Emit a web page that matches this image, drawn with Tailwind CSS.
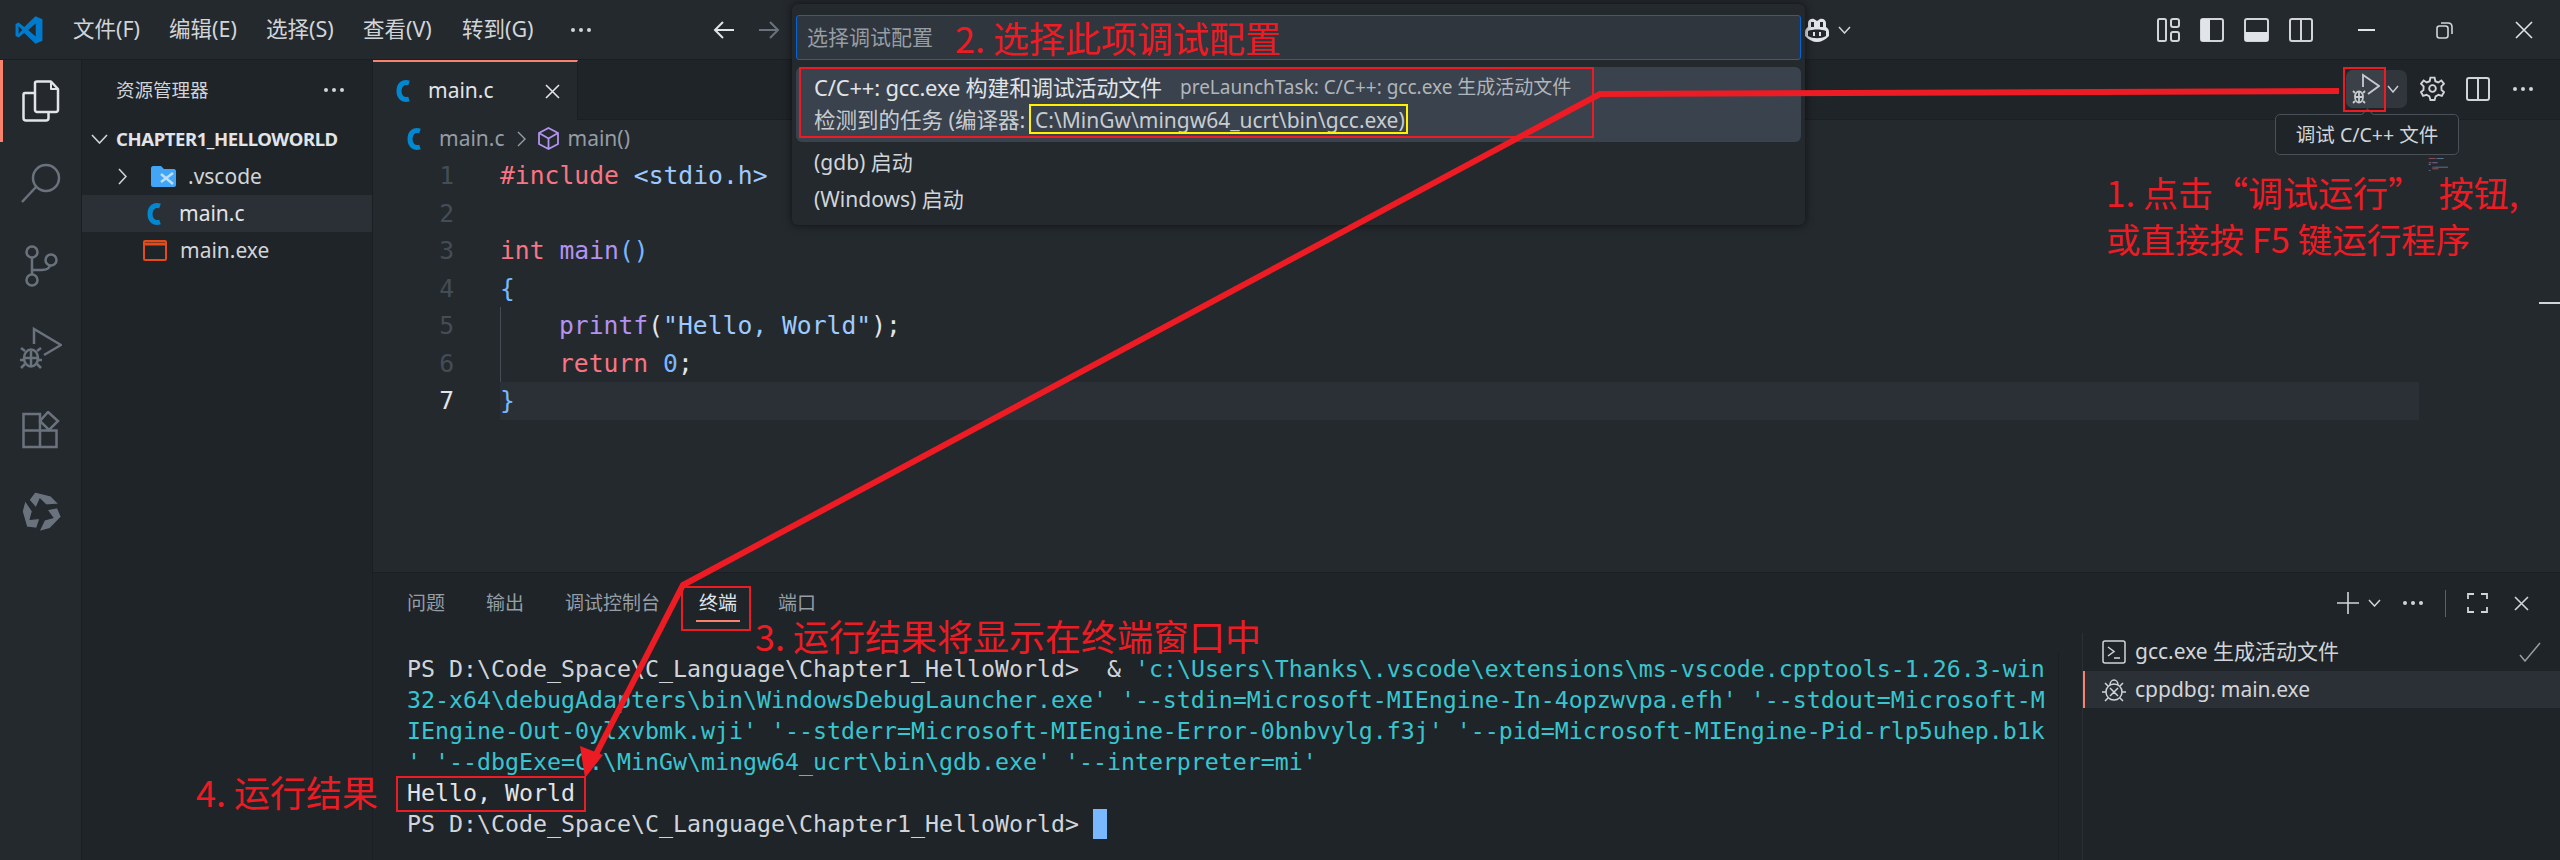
<!DOCTYPE html>
<html lang="zh-CN">
<head>
  <meta charset="UTF-8" />
  <title>main.c - Visual Studio Code</title>
  <script src="https://cdn.jsdelivr.net/npm/@tailwindcss/browser@4"></script>
</head>
<body class="bg-[#24292e]">
<div class="relative w-[2560px] h-[860px] overflow-hidden bg-[#24292e] text-[#e1e4e8] font-['Noto_Sans','Noto_Sans_CJK_SC',sans-serif]">

  <!-- title bar -->
  <header class="h-[60px] flex items-center border-b border-[#1b1f23] text-[21.500px] text-[#d1d5da]">
    <div class="w-[73px] pl-[15px] shrink-0">
      <svg width="28" height="28" viewBox="0 0 100 100"><path fill="#007acc" fill-rule="evenodd" d="M73 1L98 12V88L73 99L33 61L13 77L2 71V29L13 23L33 39ZM74 27L47 50L74 73ZM13 37V63L26 50Z"/></svg>
    </div>
    <span class="w-[96px]">文件(F)</span>
    <span class="w-[97px]">编辑(E)</span>
    <span class="w-[97px]">选择(S)</span>
    <span class="w-[99px]">查看(V)</span>
    <span class="w-[108px]">转到(G)</span>
    <svg class="w-[22px]" width="22" height="6" viewBox="0 0 22 6" fill="#d1d5da"><circle cx="3" cy="3" r="2"/><circle cx="11" cy="3" r="2"/><circle cx="19" cy="3" r="2"/></svg>
    <div class="w-[121px]"></div>
    <svg class="mr-[23px]" width="22" height="20" viewBox="0 0 22 20" fill="none" stroke="#e1e4e8" stroke-width="2"><path d="M21 10H2M10 2L2 10L10 18"/></svg>
    <svg width="22" height="20" viewBox="0 0 22 20" fill="none" stroke="#6a737d" stroke-width="2"><path d="M1 10H20M12 2L20 10L12 18"/></svg>
    <div class="w-[1025px]"></div>
    <!-- copilot -->
    <svg width="24" height="24" viewBox="0 0 24 24"><path fill="#e1e4e8" d="M3 5C3 2 6 0 9 1L12 3L15 1C18 0 21 2 21 5V9C23 10 24 12 24 14V18C20 22 16 24 12 24C8 24 4 22 0 18V14C0 12 1 10 3 9Z"/><path fill="#24292e" d="M6 4H9V9H6ZM15 4H18V9H15ZM3 13C8 11 16 11 21 13V18C16 21 8 21 3 18Z"/><path fill="#e1e4e8" d="M8 14H10V18H8ZM14 14H16V18H14Z"/></svg>
    <svg class="ml-[9px]" width="13" height="8" viewBox="0 0 13 8" fill="none" stroke="#d1d5da" stroke-width="1.5"><path d="M1 1L6.5 7L12 1"/></svg>
    <div class="w-[306px]"></div>
    <svg class="mr-[20px]" width="23" height="24" viewBox="0 0 23 24" fill="none" stroke="#d1d5da" stroke-width="2"><rect x="1" y="1" width="8" height="22" rx="1.5"/><rect x="14" y="1" width="8" height="8" rx="2"/><rect x="14" y="14" width="8" height="9" rx="2"/></svg>
    <svg class="mr-[20px]" width="24" height="24" viewBox="0 0 24 24"><rect x="1" y="1" width="22" height="22" rx="2" fill="none" stroke="#d1d5da" stroke-width="2"/><rect x="1" y="1" width="9" height="22" fill="#e1e4e8"/></svg>
    <svg class="mr-[20px]" width="25" height="24" viewBox="0 0 25 24"><rect x="1" y="1" width="23" height="22" rx="2" fill="none" stroke="#d1d5da" stroke-width="2"/><rect x="1" y="14" width="23" height="9" fill="#e1e4e8"/></svg>
    <svg class="mr-[45px]" width="24" height="24" viewBox="0 0 24 24" fill="none" stroke="#d1d5da" stroke-width="2"><rect x="1" y="1" width="22" height="22" rx="2"/><path d="M12 1V23"/></svg>
    <svg class="mr-[61px]" width="17" height="2" viewBox="0 0 17 2"><rect width="17" height="2" fill="#e1e4e8"/></svg>
    <svg class="mr-[62px]" width="17" height="18" viewBox="0 0 17 18" fill="none" stroke="#d1d5da" stroke-width="1.6"><rect x="1" y="5" width="11" height="12" rx="2.5"/><path d="M5 2H12C14.500 2 16 3.500 16 6V13"/></svg>
    <svg width="18" height="18" viewBox="0 0 18 18" fill="none" stroke="#e1e4e8" stroke-width="1.6"><path d="M1 1L17 17M17 1L1 17"/></svg>
  </header>

  <div class="flex h-[800px]">
    <!-- activity bar -->
    <nav class="relative w-[82px] shrink-0 flex flex-col items-center border-r border-[#1b1f23] bg-[#24292e]">
      <div class="absolute left-0 top-0 w-[3px] h-[82px] bg-[#f9826c]"></div>
      <div class="h-[82px] flex items-center justify-center">
        <svg width="38" height="42" viewBox="0 0 38 42" fill="none" stroke="#e1e4e8" stroke-width="2.500" stroke-linejoin="round"><path d="M12 13H3C2 13 1.500 14 1.500 15V38C1.500 39.500 2.500 40.500 4 40.500H24C25.500 40.500 26.500 39.500 26.500 38V32"/><path d="M13 3C13 2 14 1.500 15 1.500H29L36 9V30C36 31 35 32 34 32H15C14 32 13 31 13 30Z"/><path d="M29 2V9H36" stroke-width="2"/></svg>
      </div>
      <div class="h-[82px] flex items-center justify-center">
        <svg width="40" height="40" viewBox="0 0 40 40" fill="none" stroke="#6a737d" stroke-width="2.500"><circle cx="25" cy="15" r="13"/><path d="M15 24L1 39"/></svg>
      </div>
      <div class="h-[83px] flex items-center justify-center">
        <svg width="34" height="42" viewBox="0 0 34 42" fill="none" stroke="#6a737d" stroke-width="2.500"><circle cx="8" cy="7" r="5.500"/><circle cx="8" cy="35" r="5.500"/><circle cx="27" cy="15" r="5.500"/><path d="M8 12.500V29.500M8 25H18C22 25 25 24 26 20.500"/></svg>
      </div>
      <div class="h-[82px] flex items-center justify-center">
        <svg width="42" height="42" viewBox="0 0 42 42" fill="none" stroke="#6a737d" stroke-width="2.500"><path d="M14 17V2L41 18L24 28"/><ellipse cx="11" cy="31" rx="7" ry="8.500"/><path d="M4 31H18M11 24V39M5 24L1 21M17 24L21 21M4 33L0 33M18 33L22 33M5 37L1 41M17 37L21 41"/></svg>
      </div>
      <div class="h-[82px] flex items-center justify-center">
        <svg width="38" height="38" viewBox="0 0 38 38" fill="none" stroke="#6a737d" stroke-width="2.500"><path d="M1.500 3H18V36H1.500ZM1.500 19.500H34.500V36H18"/><path d="M26 1L36 10L27 19L18 10Z"/></svg>
      </div>
      <div class="h-[82px] flex items-center justify-center">
        <svg width="42" height="42" viewBox="0 0 42 42" fill="#6a737d" stroke="#24292e" stroke-width="1.200">
          <path d="M15 1L31 5L39 13L26 14L20 8L16 17L9 9Z"/>
          <path d="M15 1L31 5L39 13L26 14L20 8L16 17L9 9Z" transform="rotate(120 21 21)"/>
          <path d="M15 1L31 5L39 13L26 14L20 8L16 17L9 9Z" transform="rotate(240 21 21)"/>
        </svg>
      </div>
    </nav>

    <!-- sidebar -->
    <aside class="w-[291px] shrink-0 bg-[#1f2428] border-r border-[#1b1f23]">
      <div class="h-[60px] pl-[34px] pr-[27px] flex items-center justify-between text-[18.500px] text-[#d1d5da]">
        <span>资源管理器</span>
        <svg width="22" height="6" viewBox="0 0 22 6" fill="#d1d5da"><circle cx="3" cy="3" r="2"/><circle cx="11" cy="3" r="2"/><circle cx="19" cy="3" r="2"/></svg>
      </div>
      <div class="h-[38px] flex items-center font-bold text-[18.500px] text-[#e1e4e8]">
        <svg class="ml-[9px] mr-[8px]" width="17" height="10" viewBox="0 0 17 10" fill="none" stroke="#d1d5da" stroke-width="1.600"><path d="M1 1L8.500 9L16 1"/></svg>
        <span class="tracking-[-0.4px]">CHAPTER1_HELLOWORLD</span>
      </div>
      <div class="h-[37px] flex items-center text-[21px] text-[#d1d5da]">
        <svg class="ml-[36px] mr-[24px]" width="9" height="17" viewBox="0 0 9 17" fill="none" stroke="#d1d5da" stroke-width="1.600"><path d="M1 1L8 8.500L1 16"/></svg>
        <svg class="mr-[11px]" width="26" height="22" viewBox="0 0 26 22"><path fill="#42a5f5" d="M0 2C0 1 1 0 2 0H10L13 3H23C24 3 25 4 25 5V19C25 20 24 21 23 21H2C1 21 0 20 0 19Z"/><path fill="none" stroke="#bbdefb" stroke-width="2.500" d="M10 16L22 7M10 8L22 18"/></svg>
        <span>.vscode</span>
      </div>
      <div class="h-[37px] flex items-center text-[21px] text-[#e1e4e8] bg-[#2b3036]">
        <svg class="ml-[65px] mr-[18px]" width="14" height="24" viewBox="0 0 14 24" fill="none" stroke="#0288d1" stroke-width="5"><path d="M13 4C7 2 3 6 3 12C3 18 7 22 13 20"/></svg>
        <span>main.c</span>
      </div>
      <div class="h-[37px] flex items-center text-[21px] text-[#d1d5da]">
        <svg class="ml-[61px] mr-[13px]" width="24" height="21" viewBox="0 0 24 21" fill="none" stroke="#e64a19" stroke-width="2"><rect x="1" y="1" width="22" height="19" rx="1"/><path d="M1 4H23" stroke-width="3"/></svg>
        <span>main.exe</span>
      </div>
    </aside>

    <div class="flex-1 flex flex-col min-w-0">
      <!-- editor -->
      <section class="relative h-[513px] border-b border-[#1b1f23]">
        <div class="h-[60px] flex bg-[#1f2428] border-b border-[#1b1f23]">
          <div class="w-[205px] h-[60px] bg-[#24292e] border-t-2 border-[#f9826c] border-r border-r-[#1b1f23] flex items-center text-[21px] pl-[23px]">
            <svg class="mr-[18px]" width="14" height="24" viewBox="0 0 14 24" fill="none" stroke="#0288d1" stroke-width="5"><path d="M13 4C7 2 3 6 3 12C3 18 7 22 13 20"/></svg>
            <span class="w-[117px]">main.c</span>
            <svg width="15" height="15" viewBox="0 0 15 15" fill="none" stroke="#e1e4e8" stroke-width="1.600"><path d="M1 1L14 14M14 1L1 14"/></svg>
          </div>
          <div class="flex-1 flex justify-end items-center pr-[26px] pb-[2px]">
            <div class="relative w-[61px] h-[38px] mr-[13px] rounded-[7px] bg-[#30363c] flex items-center">
              <div class="w-[40px] h-[38px] rounded-l-[7px] bg-[#3b4148] flex justify-center items-center">
                <svg width="28" height="32" viewBox="0 0 28 32" fill="none" stroke="#c8ccd0" stroke-width="1.800"><path d="M11 14V2L27 13L16 21"/><ellipse cx="7" cy="24" rx="4" ry="5.500"/><path d="M3 24H11M7 19V29M3 20L1 18M11 20L13 18M3 28L1 30M11 28L13 30"/></svg>
              </div>
              <svg class="ml-[1px]" width="12" height="8" viewBox="0 0 12 8" fill="none" stroke="#c8ccd0" stroke-width="1.500"><path d="M1 1L6 7L11 1"/></svg>
            </div>
            <svg class="mr-[21px]" width="25" height="25" viewBox="0 0 24 24" fill="none" stroke="#d1d5da" stroke-width="1.800"><circle cx="12" cy="12" r="3.200"/><path d="M10 1.500H14L14.700 5L17.500 6.200L20.500 4.300L23 7.500L20.500 10L20.700 13.500L23 15.500L21 19L17.800 18L15 19.500L14 23H10L9 19.500L6.200 18L3 19L1 15.500L3.300 13.500L3.500 10L1 7.500L3.500 4.300L6.500 6.200L9.300 5Z"/></svg>
            <svg class="mr-[22px]" width="24" height="24" viewBox="0 0 24 24" fill="none" stroke="#d1d5da" stroke-width="2"><rect x="1" y="1" width="22" height="22" rx="2"/><path d="M12 1V23"/></svg>
            <svg width="22" height="6" viewBox="0 0 22 6" fill="#d1d5da"><circle cx="3" cy="3" r="2"/><circle cx="11" cy="3" r="2"/><circle cx="19" cy="3" r="2"/></svg>
          </div>
        </div>
        <div class="h-[37px] flex items-center pl-[34px] text-[21px] text-[#959da5]">
          <svg class="mr-[18px]" width="14" height="24" viewBox="0 0 14 24" fill="none" stroke="#0288d1" stroke-width="5"><path d="M13 4C7 2 3 6 3 12C3 18 7 22 13 20"/></svg>
          <span>main.c</span>
          <svg class="mx-[12px]" width="9" height="16" viewBox="0 0 9 16" fill="none" stroke="#959da5" stroke-width="1.400"><path d="M1 1L8 8L1 15"/></svg>
          <svg class="mr-[9px]" width="21" height="23" viewBox="0 0 21 23" fill="none" stroke="#b392f0" stroke-width="1.800"><path d="M10.500 1L20 6V17L10.500 22L1 17V6ZM1 6L10.500 11.500L20 6M10.500 11.500V22"/></svg>
          <span>main()</span>
        </div>
        <div class="flex font-['DejaVu_Sans_Mono',monospace] text-[24.700px] leading-[37.500px]">
          <div class="w-[81px] text-right text-[#444d56]">
            <div>1</div><div>2</div><div>3</div><div>4</div><div>5</div><div>6</div><div class="text-[#e1e4e8]">7</div>
          </div>
          <div class="ml-[46px] w-[1919px]">
            <div class="h-[37.500px] whitespace-pre"><span class="text-[#f97583]">#include</span> <span class="text-[#9ecbff]">&lt;stdio.h&gt;</span></div>
            <div class="h-[37.500px]"></div>
            <div class="h-[37.500px] whitespace-pre"><span class="text-[#f97583]">int</span> <span class="text-[#b392f0]">main</span><span class="text-[#79b8ff]">()</span></div>
            <div class="h-[37.500px] text-[#79b8ff]">{</div>
            <div class="h-[37.500px] border-l border-[#444d56] pl-[58px] whitespace-pre"><span class="text-[#b392f0]">printf</span><span class="text-[#e1e4e8]">(</span><span class="text-[#9ecbff]">"Hello, World"</span><span class="text-[#e1e4e8]">);</span></div>
            <div class="h-[37.500px] border-l border-[#444d56] pl-[58px] whitespace-pre"><span class="text-[#f97583]">return</span> <span class="text-[#79b8ff]">0</span><span class="text-[#e1e4e8]">;</span></div>
            <div class="h-[37.500px] bg-[#2b3036] text-[#79b8ff]">}</div>
          </div>
          <!-- minimap -->
          <div class="ml-[8px]">
            <svg class="opacity-60" width="28" height="14" viewBox="0 0 28 16"><path fill="#f97583" d="M0 1H8V2H0ZM0 6H3V7H0Z"/><path fill="#9ecbff" d="M9 1H17V2H9ZM7 11H22V12H7Z"/><path fill="#b392f0" d="M4 6H10V7H4ZM4 11H7V12H4Z"/><path fill="#79b8ff" d="M0 8H2V9H0ZM0 15H2V16H0Z"/><path fill="#f97583" d="M4 13H11V14H4Z"/></svg>
          </div>
        </div>
        <div class="absolute right-0 top-[242px] w-[21px] h-[2px] bg-[#d1d5da]"></div>
      </section>

      <!-- panel -->
      <section class="h-[287px] bg-[#1f2428] text-[19px] text-[#959da5]">
        <div class="h-[60px] flex items-center pl-[34px]">
          <span class="mr-[41px]">问题</span>
          <span class="mr-[41px]">输出</span>
          <span class="mr-[39px]">调试控制台</span>
          <span class="relative mr-[41px] text-[#e1e4e8]">终端<span class="absolute left-[-3px] right-[-3px] bottom-[-5px] h-[2px] bg-[#f9826c]"></span></span>
          <span>端口</span>
          <div class="flex-1"></div>
          <svg class="mr-[9px]" width="22" height="22" viewBox="0 0 22 22" fill="none" stroke="#d1d5da" stroke-width="1.600"><path d="M11 0V22M0 11H22"/></svg>
          <svg class="mr-[21px]" width="13" height="8" viewBox="0 0 13 8" fill="none" stroke="#d1d5da" stroke-width="1.500"><path d="M1 1L6.500 7L12 1"/></svg>
          <svg class="mr-[21px]" width="22" height="6" viewBox="0 0 22 6" fill="#d1d5da"><circle cx="3" cy="3" r="2"/><circle cx="11" cy="3" r="2"/><circle cx="19" cy="3" r="2"/></svg>
          <div class="w-px h-[27px] bg-[#586069] mr-[21px]"></div>
          <svg class="mr-[26px]" width="21" height="20" viewBox="0 0 21 20" fill="none" stroke="#d1d5da" stroke-width="1.800"><path d="M1 6V1H7M14 1H20V6M20 14V19H14M7 19H1V14"/></svg>
          <svg class="mr-[31px]" width="15" height="15" viewBox="0 0 15 15" fill="none" stroke="#d1d5da" stroke-width="1.600"><path d="M1 1L14 14M14 1L1 14"/></svg>
        </div>
        <div class="flex h-[227px]">
          <div class="w-[1685px] pl-[34px] pt-[20px] font-['DejaVu_Sans_Mono',monospace] text-[23.250px] leading-[31px] text-[#39c5cf]">
            <div class="whitespace-pre"><span class="text-[#d1d5da]">PS D:\Code_Space\C_Language\Chapter1_HelloWorld&gt;  &amp; </span>'c:\Users\Thanks\.vscode\extensions\ms-vscode.cpptools-1.26.3-win</div>
            <div class="whitespace-pre">32-x64\debugAdapters\bin\WindowsDebugLauncher.exe' '--stdin=Microsoft-MIEngine-In-4opzwvpa.efh' '--stdout=Microsoft-M</div>
            <div class="whitespace-pre">IEngine-Out-0ylxvbmk.wji' '--stderr=Microsoft-MIEngine-Error-0bnbvylg.f3j' '--pid=Microsoft-MIEngine-Pid-rlp5uhep.b1k</div>
            <div class="whitespace-pre">' '--dbgExe=C:\MinGw\mingw64_ucrt\bin\gdb.exe' '--interpreter=mi'</div>
            <div class="text-[#e1e4e8]">Hello, World</div>
            <div class="flex items-center text-[#d1d5da]"><span class="whitespace-pre">PS D:\Code_Space\C_Language\Chapter1_HelloWorld&gt; </span><span class="w-[14px] h-[30px] bg-[#79b8ff]"></span></div>
          </div>
          <div class="w-[24px] mt-[20px] border-l border-[#1b1f23]"></div>
          <div class="flex-1 border-l border-[#2b3036] text-[21px] text-[#d1d5da]">
            <div class="h-[38px] flex items-center pl-[19px] pr-[19px]">
              <svg class="mr-[9px]" width="24" height="24" viewBox="0 0 24 24" fill="none" stroke="#d1d5da" stroke-width="1.500"><rect x="1" y="1" width="22" height="22" rx="2"/><path d="M6 7L12 11.500L6 16M12 18H18"/></svg>
              <span>gcc.exe 生成活动文件</span>
              <div class="flex-1"></div>
              <svg width="22" height="20" viewBox="0 0 22 20" fill="none" stroke="#959da5" stroke-width="1.500"><path d="M1 13L6 19L21 1"/></svg>
            </div>
            <div class="h-[37px] flex items-center pl-[17px] bg-[#2b3036] border-l-2 border-[#f9826c]">
              <svg class="mr-[9px]" width="24" height="26" viewBox="0 0 24 26" fill="none" stroke="#d1d5da" stroke-width="1.500"><circle cx="12" cy="15" r="8"/><path d="M8 8C8 5 10 3 12 3C14 3 16 5 16 8M8 11L16 19M16 11L8 19M4 15H0M24 15H20M6 9L3 6M18 9L21 6M6 21L3 24M18 21L21 24"/></svg>
              <span>cppdbg: main.exe</span>
            </div>
          </div>
        </div>
      </section>
    </div>
  </div>

  <!-- quick pick -->
  <div class="absolute left-[792px] top-[4px] w-[1013px] h-[221px] bg-[#24292e] shadow-[0_0_8px_rgba(0,0,0,0.6)] rounded-[6px] px-[4px] pt-[11px] text-[21px]">
    <div class="h-[45px] border border-[#0366d6] bg-[#2f363d] rounded-[3px] flex items-center pl-[10px] text-[#959da5]">选择调试配置</div>
    <div class="mt-[7px] h-[75px] rounded-[6px] bg-[#39424d] pl-[18px]">
      <div class="h-[40px] flex items-center">
        <span class="w-[366px] text-[22px] tracking-[-0.2px]">C/C++: gcc.exe 构建和调试活动文件</span>
        <span class="text-[19px] text-[#b0b6bc]">preLaunchTask: C/C++: gcc.exe 生成活动文件</span>
      </div>
      <div class="h-[27px] flex items-center text-[#c8ccd0]"><span class="w-[221px] text-[21.500px]">检测到的任务 (编译器:</span><span>C:\MinGw\mingw64_ucrt\bin\gcc.exe)</span></div>
    </div>
    <div class="h-[37px] mt-[2px] flex items-center pl-[18px] text-[#d1d5da]">(gdb) 启动</div>
    <div class="h-[37px] flex items-center pl-[18px] text-[#d1d5da]">(Windows) 启动</div>
  </div>

  <!-- tooltip -->
  <div class="absolute left-[2275px] top-[114px] w-[184px] h-[41px] rounded-[5px] bg-[#1f2428] border border-[#4a5057] flex items-center justify-center text-[19.500px] text-[#d1d5da]">
    调试 C/C++ 文件
    <span class="absolute left-[87px] top-[-5px] w-[9px] h-[9px] rotate-45 bg-[#1f2428] border-l border-t border-[#4a5057]"></span>
  </div>

  <!-- red annotations -->
  <svg class="absolute left-0 top-0 pointer-events-none" width="2560" height="860" viewBox="0 0 2560 860" fill="none">
    <path d="M2339 91L1600 94L683 585L592 762" stroke="#ed1c24" stroke-width="6" stroke-linejoin="miter"/>
    <path d="M585 778L580 746L603 755Z" fill="#ed1c24"/>
    <rect x="800" y="68" width="793" height="69" stroke="#ed1c24" stroke-width="2"/>
    <rect x="1030" y="105" width="377" height="28" stroke="#fff200" stroke-width="2"/>
    <rect x="2344" y="68" width="41" height="43" stroke="#ed1c24" stroke-width="2"/>
    <rect x="682" y="587" width="68" height="43" stroke="#ed1c24" stroke-width="2"/>
    <rect x="397" y="777" width="188" height="34" stroke="#ed1c24" stroke-width="2"/>
  </svg>
  <div class="absolute left-[955px] top-[15px] text-[36px] leading-[44px] whitespace-pre text-[#ed1c24] font-['Noto_Sans_CJK_SC',sans-serif]">2. 选择此项调试配置</div>
  <div class="absolute left-[2106px] top-[168px] leading-[47px] whitespace-pre text-[#ed1c24] font-['Noto_Sans_CJK_SC',sans-serif]"><div class="text-[35px]">1. 点击“调试运行”  按钮,</div><div class="text-[34.500px]">或直接按 F5 键运行程序</div></div>
  <div class="absolute left-[755px] top-[613px] text-[36px] leading-[44px] whitespace-pre text-[#ed1c24] font-['Noto_Sans_CJK_SC',sans-serif]">3. 运行结果将显示在终端窗口中</div>
  <div class="absolute left-[196px] top-[769px] text-[36px] leading-[44px] whitespace-pre text-[#ed1c24] font-['Noto_Sans_CJK_SC',sans-serif]">4. 运行结果</div>
</div>
</body>
</html>
